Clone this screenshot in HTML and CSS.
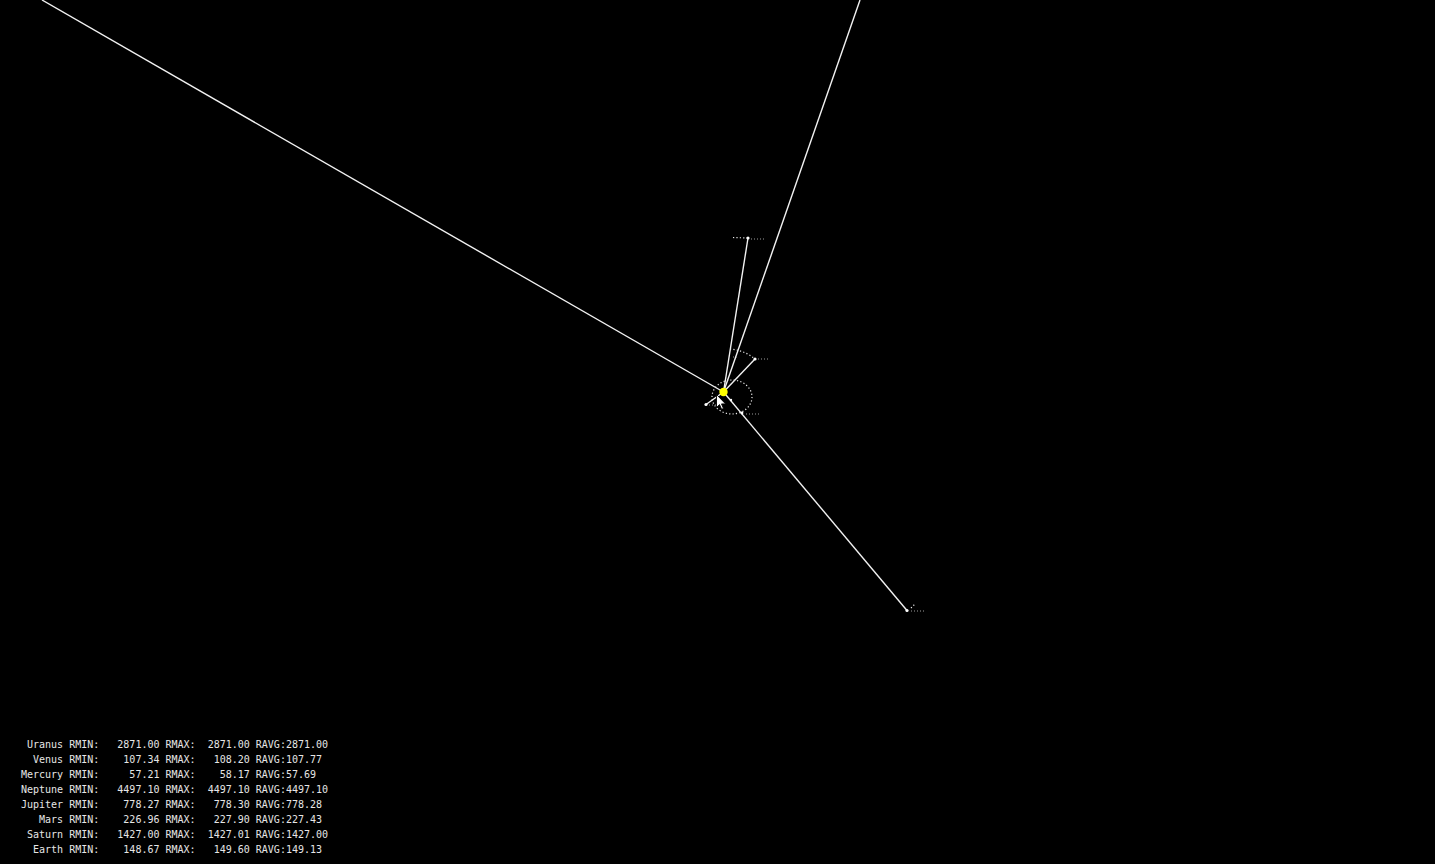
FILE: index.html
```html
<!DOCTYPE html>
<html>
<head>
<meta charset="utf-8">
<link rel="stylesheet" href="styles.css">
</head>
<body>
<div class="stage">
  <svg class="sky" width="1435" height="864" viewBox="0 0 1435 864">
    <g class="rays">
      <line x1="723.5" y1="392" x2="42" y2="0"/>
      <line x1="723.5" y1="392" x2="860" y2="0"/>
      <line x1="723.5" y1="392" x2="748" y2="238"/>
      <line x1="723.5" y1="392" x2="755" y2="359"/>
      <line x1="723.5" y1="392" x2="706" y2="404.5"/>
      <line x1="723.5" y1="392" x2="907" y2="610.5"/>
    </g>
    <g class="trails">
      <path d="M730 349 A 44 44 0 0 1 755 359"/>
      <ellipse cx="732" cy="397" rx="20" ry="17"/>
      <path d="M733 237.5 L748 238"/>
      <path d="M911 608 L915 604"/>
    </g>
    <g class="labels">
      <line x1="751" y1="239" x2="764" y2="239"/>
      <line x1="758" y1="359" x2="769" y2="359"/>
      <line x1="709" y1="405" x2="721" y2="405"/>
      <line x1="746" y1="414" x2="760" y2="414"/>
      <line x1="911" y1="611" x2="925" y2="611"/>
      <line x1="733" y1="357" x2="738" y2="357"/>
    </g>
    <g class="planets">
      <circle cx="748" cy="238" r="1.6"/>
      <circle cx="755" cy="359" r="1.6"/>
      <circle cx="706" cy="404.5" r="1.6"/>
      <circle cx="742" cy="413" r="1.4"/>
      <circle cx="907" cy="610.5" r="1.6"/>
      <circle cx="731" cy="400" r="1.2"/>
    </g>
    <circle class="sun" cx="723.5" cy="392" r="4.2"/>
    <path class="cursor" d="M716.5 394.5 L716.5 407.5 L719.5 404.6 L721.6 409.3 L723.5 408.5 L721.5 403.9 L725.6 403.9 Z"/>
  </svg>
<pre class="stats">
 Uranus RMIN:   2871.00 RMAX:  2871.00 RAVG:2871.00
  Venus RMIN:    107.34 RMAX:   108.20 RAVG:107.77
Mercury RMIN:     57.21 RMAX:    58.17 RAVG:57.69
Neptune RMIN:   4497.10 RMAX:  4497.10 RAVG:4497.10
Jupiter RMIN:    778.27 RMAX:   778.30 RAVG:778.28
   Mars RMIN:    226.96 RMAX:   227.90 RAVG:227.43
 Saturn RMIN:   1427.00 RMAX:  1427.01 RAVG:1427.00
  Earth RMIN:    148.67 RMAX:   149.60 RAVG:149.13</pre>
</div>
</body>
</html>
```
FILE: styles.css
```css
html, body {
  margin: 0;
  padding: 0;
  background: #000;
  overflow: hidden;
}
.stage {
  position: relative;
  width: 1435px;
  height: 864px;
  background: #000;
}
.sky {
  position: absolute;
  left: 0;
  top: 0;
  display: block;
}
.rays line {
  stroke: #f2f2f2;
  stroke-width: 1.4;
}
.trails path, .trails ellipse {
  fill: none;
  stroke: #e8e8e8;
  stroke-width: 1.2;
  stroke-dasharray: 1.2 2.2;
}
.labels line {
  stroke: #9a9a9a;
  stroke-width: 1;
  stroke-dasharray: 1 2;
}
.planets circle {
  fill: #fff;
}
.sun {
  fill: #ffff00;
}
.cursor {
  fill: #fff;
  stroke: #000;
  stroke-width: 0.9;
  stroke-linejoin: miter;
}
.stats {
  position: absolute;
  left: 21px;
  bottom: 7px;
  margin: 0;
  font-family: "DejaVu Sans Mono", monospace;
  font-size: 10px;
  line-height: 15px;
  color: #e6e6e6;
  white-space: pre;
}
```
